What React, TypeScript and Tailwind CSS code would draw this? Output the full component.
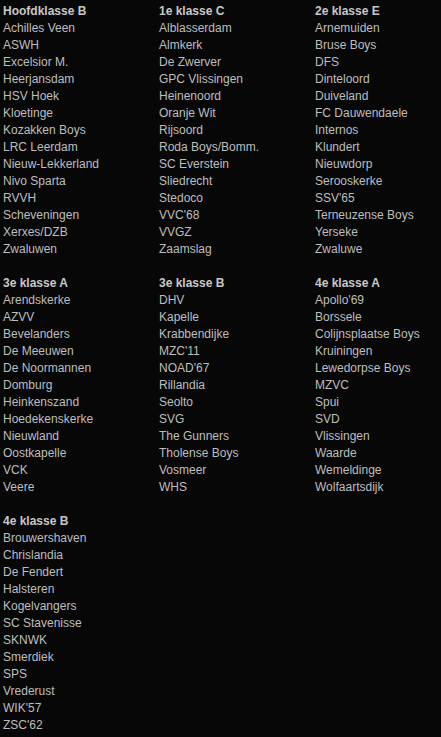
const groups: { title: string; clubs: string[] }[] = [
  {
    title: "Hoofdklasse B",
    clubs: [
      "Achilles Veen",
      "ASWH",
      "Excelsior M.",
      "Heerjansdam",
      "HSV Hoek",
      "Kloetinge",
      "Kozakken Boys",
      "LRC Leerdam",
      "Nieuw-Lekkerland",
      "Nivo Sparta",
      "RVVH",
      "Scheveningen",
      "Xerxes/DZB",
      "Zwaluwen",
    ],
  },
  {
    title: "1e klasse C",
    clubs: [
      "Alblasserdam",
      "Almkerk",
      "De Zwerver",
      "GPC Vlissingen",
      "Heinenoord",
      "Oranje Wit",
      "Rijsoord",
      "Roda Boys/Bomm.",
      "SC Everstein",
      "Sliedrecht",
      "Stedoco",
      "VVC'68",
      "VVGZ",
      "Zaamslag",
    ],
  },
  {
    title: "2e klasse E",
    clubs: [
      "Arnemuiden",
      "Bruse Boys",
      "DFS",
      "Dinteloord",
      "Duiveland",
      "FC Dauwendaele",
      "Internos",
      "Klundert",
      "Nieuwdorp",
      "Serooskerke",
      "SSV'65",
      "Terneuzense Boys",
      "Yerseke",
      "Zwaluwe",
    ],
  },
  {
    title: "3e klasse A",
    clubs: [
      "Arendskerke",
      "AZVV",
      "Bevelanders",
      "De Meeuwen",
      "De Noormannen",
      "Domburg",
      "Heinkenszand",
      "Hoedekenskerke",
      "Nieuwland",
      "Oostkapelle",
      "VCK",
      "Veere",
    ],
  },
  {
    title: "3e klasse B",
    clubs: [
      "DHV",
      "Kapelle",
      "Krabbendijke",
      "MZC'11",
      "NOAD'67",
      "Rillandia",
      "Seolto",
      "SVG",
      "The Gunners",
      "Tholense Boys",
      "Vosmeer",
      "WHS",
    ],
  },
  {
    title: "4e klasse A",
    clubs: [
      "Apollo'69",
      "Borssele",
      "Colijnsplaatse Boys",
      "Kruiningen",
      "Lewedorpse Boys",
      "MZVC",
      "Spui",
      "SVD",
      "Vlissingen",
      "Waarde",
      "Wemeldinge",
      "Wolfaartsdijk",
    ],
  },
  {
    title: "4e klasse B",
    clubs: [
      "Brouwershaven",
      "Chrislandia",
      "De Fendert",
      "Halsteren",
      "Kogelvangers",
      "SC Stavenisse",
      "SKNWK",
      "Smerdiek",
      "SPS",
      "Vrederust",
      "WIK'57",
      "ZSC'62",
    ],
  },
];

function App() {
  return (
    <div className="min-h-screen w-[441px] bg-[#070708] pl-[3px] pt-[3px] font-['Liberation_Sans',Arial,sans-serif] text-[12px] leading-[17px] text-[#bebebe]">
      <div className="grid grid-cols-[156px_156px_126px] gap-y-[17px]">
        {groups.map((g) => (
          <div key={g.title}>
            <h2 className="font-bold text-[#c8c8c8]">{g.title}</h2>
            <ul>
              {g.clubs.map((c) => (
                <li key={c} className="whitespace-nowrap">
                  {c}
                </li>
              ))}
            </ul>
          </div>
        ))}
      </div>
    </div>
  );
}

export default App;
